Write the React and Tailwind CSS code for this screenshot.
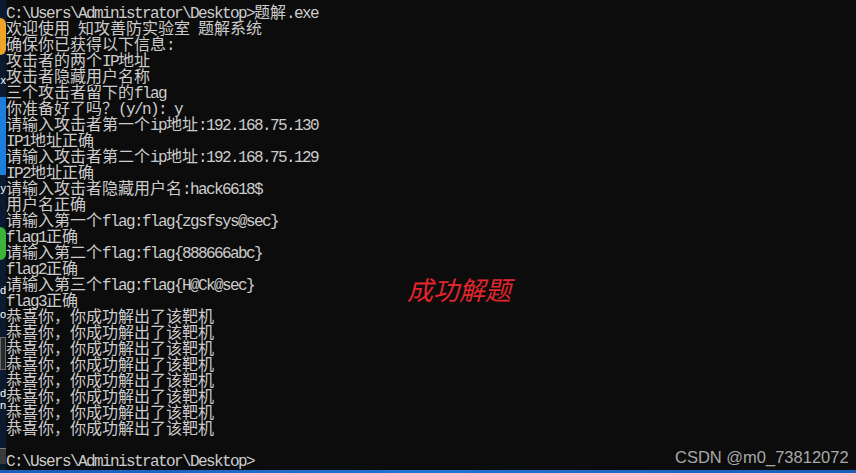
import React from "react";

const lines = [
  "C:\\Users\\Administrator\\Desktop>题解.exe",
  "欢迎使用 知攻善防实验室 题解系统",
  "确保你已获得以下信息:",
  "攻击者的两个IP地址",
  "攻击者隐藏用户名称",
  "三个攻击者留下的flag",
  "你准备好了吗？(y/n): y",
  "请输入攻击者第一个ip地址:192.168.75.130",
  "IP1地址正确",
  "请输入攻击者第二个ip地址:192.168.75.129",
  "IP2地址正确",
  "请输入攻击者隐藏用户名:hack6618$",
  "用户名正确",
  "请输入第一个flag:flag{zgsfsys@sec}",
  "flag1正确",
  "请输入第二个flag:flag{888666abc}",
  "flag2正确",
  "请输入第三个flag:flag{H@Ck@sec}",
  "flag3正确",
  "恭喜你，你成功解出了该靶机",
  "恭喜你，你成功解出了该靶机",
  "恭喜你，你成功解出了该靶机",
  "恭喜你，你成功解出了该靶机",
  "恭喜你，你成功解出了该靶机",
  "恭喜你，你成功解出了该靶机",
  "恭喜你，你成功解出了该靶机",
  "恭喜你，你成功解出了该靶机",
  "",
  "C:\\Users\\Administrator\\Desktop>",
];

// split a console line into half-width (ascii) and full-width runs
const ConsoleLine = ({ text }) => {
  const runs = text.match(/[\x00-\x7f]+|[^\x00-\x7f]+/g) || [];
  return (
    <div className="h-4 leading-4 whitespace-pre font-['Noto_Sans_CJK_SC']">
      {runs.map((run, i) =>
        /^[\x00-\x7f]/.test(run) ? (
          <span key={i} className="font-['Liberation_Mono'] tracking-[-1.6px]">
            {run}
          </span>
        ) : (
          <span key={i}>{run}</span>
        )
      )}
    </div>
  );
};

const DesktopStrip = () => (
  <div className="w-[6px] h-full flex flex-col overflow-hidden bg-[#0b1a2e] text-white text-[11px] leading-none font-['Liberation_Sans'] shrink-0">
    <div className="h-[18px]" />
    <div className="h-[37px] bg-[#f0a526] rounded-r-full" />
    <div className="h-[20px]" />
    <div className="h-[10px] flex justify-end">x</div>
    <div className="h-[12px]" />
    <div className="h-[78px] bg-[#1c7fdc]" />
    <div className="h-[8px]" />
    <div className="h-[12px] flex justify-end">y</div>
    <div className="h-[32px]" />
    <div className="h-[33px] bg-[#3db33a] rounded-r-full" />
    <div className="h-[25px]" />
    <div className="h-[10px] flex justify-end">d</div>
    <div className="h-[14px]" />
    <div className="h-[10px] flex justify-end">o</div>
    <div className="h-[18px]" />
    <div className="h-[33px] bg-[#2a2a2a] border border-[#6a6a6a]" />
    <div className="h-[18px]" />
    <div className="h-[10px] flex justify-end">d</div>
    <div className="h-[2px]" />
    <div className="h-[10px] flex justify-end">n</div>
    <div className="h-[38px]" />
    <div className="h-[16px] bg-[#3a3a3a] border-t border-[#7a7a7a]" />
  </div>
);

export default function App() {
  return (
    <div className="relative w-[856px] h-[473px] overflow-hidden bg-[#0c0c0c]">
      <div className="flex h-[470px]">
        <DesktopStrip />
        <div className="flex-1 bg-[#0c0c0c] text-[#cccccc] text-[16px] pt-[3px] overflow-hidden">
          {lines.map((l, i) => (
            <ConsoleLine key={i} text={l} />
          ))}
        </div>
      </div>
      <div className="h-[3px] bg-gradient-to-r from-[#1b5fb8] via-[#1e74d6] to-[#1b5fb8]" />

      {/* annotation over the console */}
      <div className="absolute left-[407px] top-[276px] text-[26px] leading-none italic text-[#e3262d] font-['Noto_Sans_CJK_SC']">
        成功解题
      </div>

      {/* watermark */}
      <div className="absolute left-[675px] top-[449px] text-[16.5px] leading-none text-[#a9a9a9] font-['Liberation_Sans']">
        CSDN @m0_73812072
      </div>
    </div>
  );
}
